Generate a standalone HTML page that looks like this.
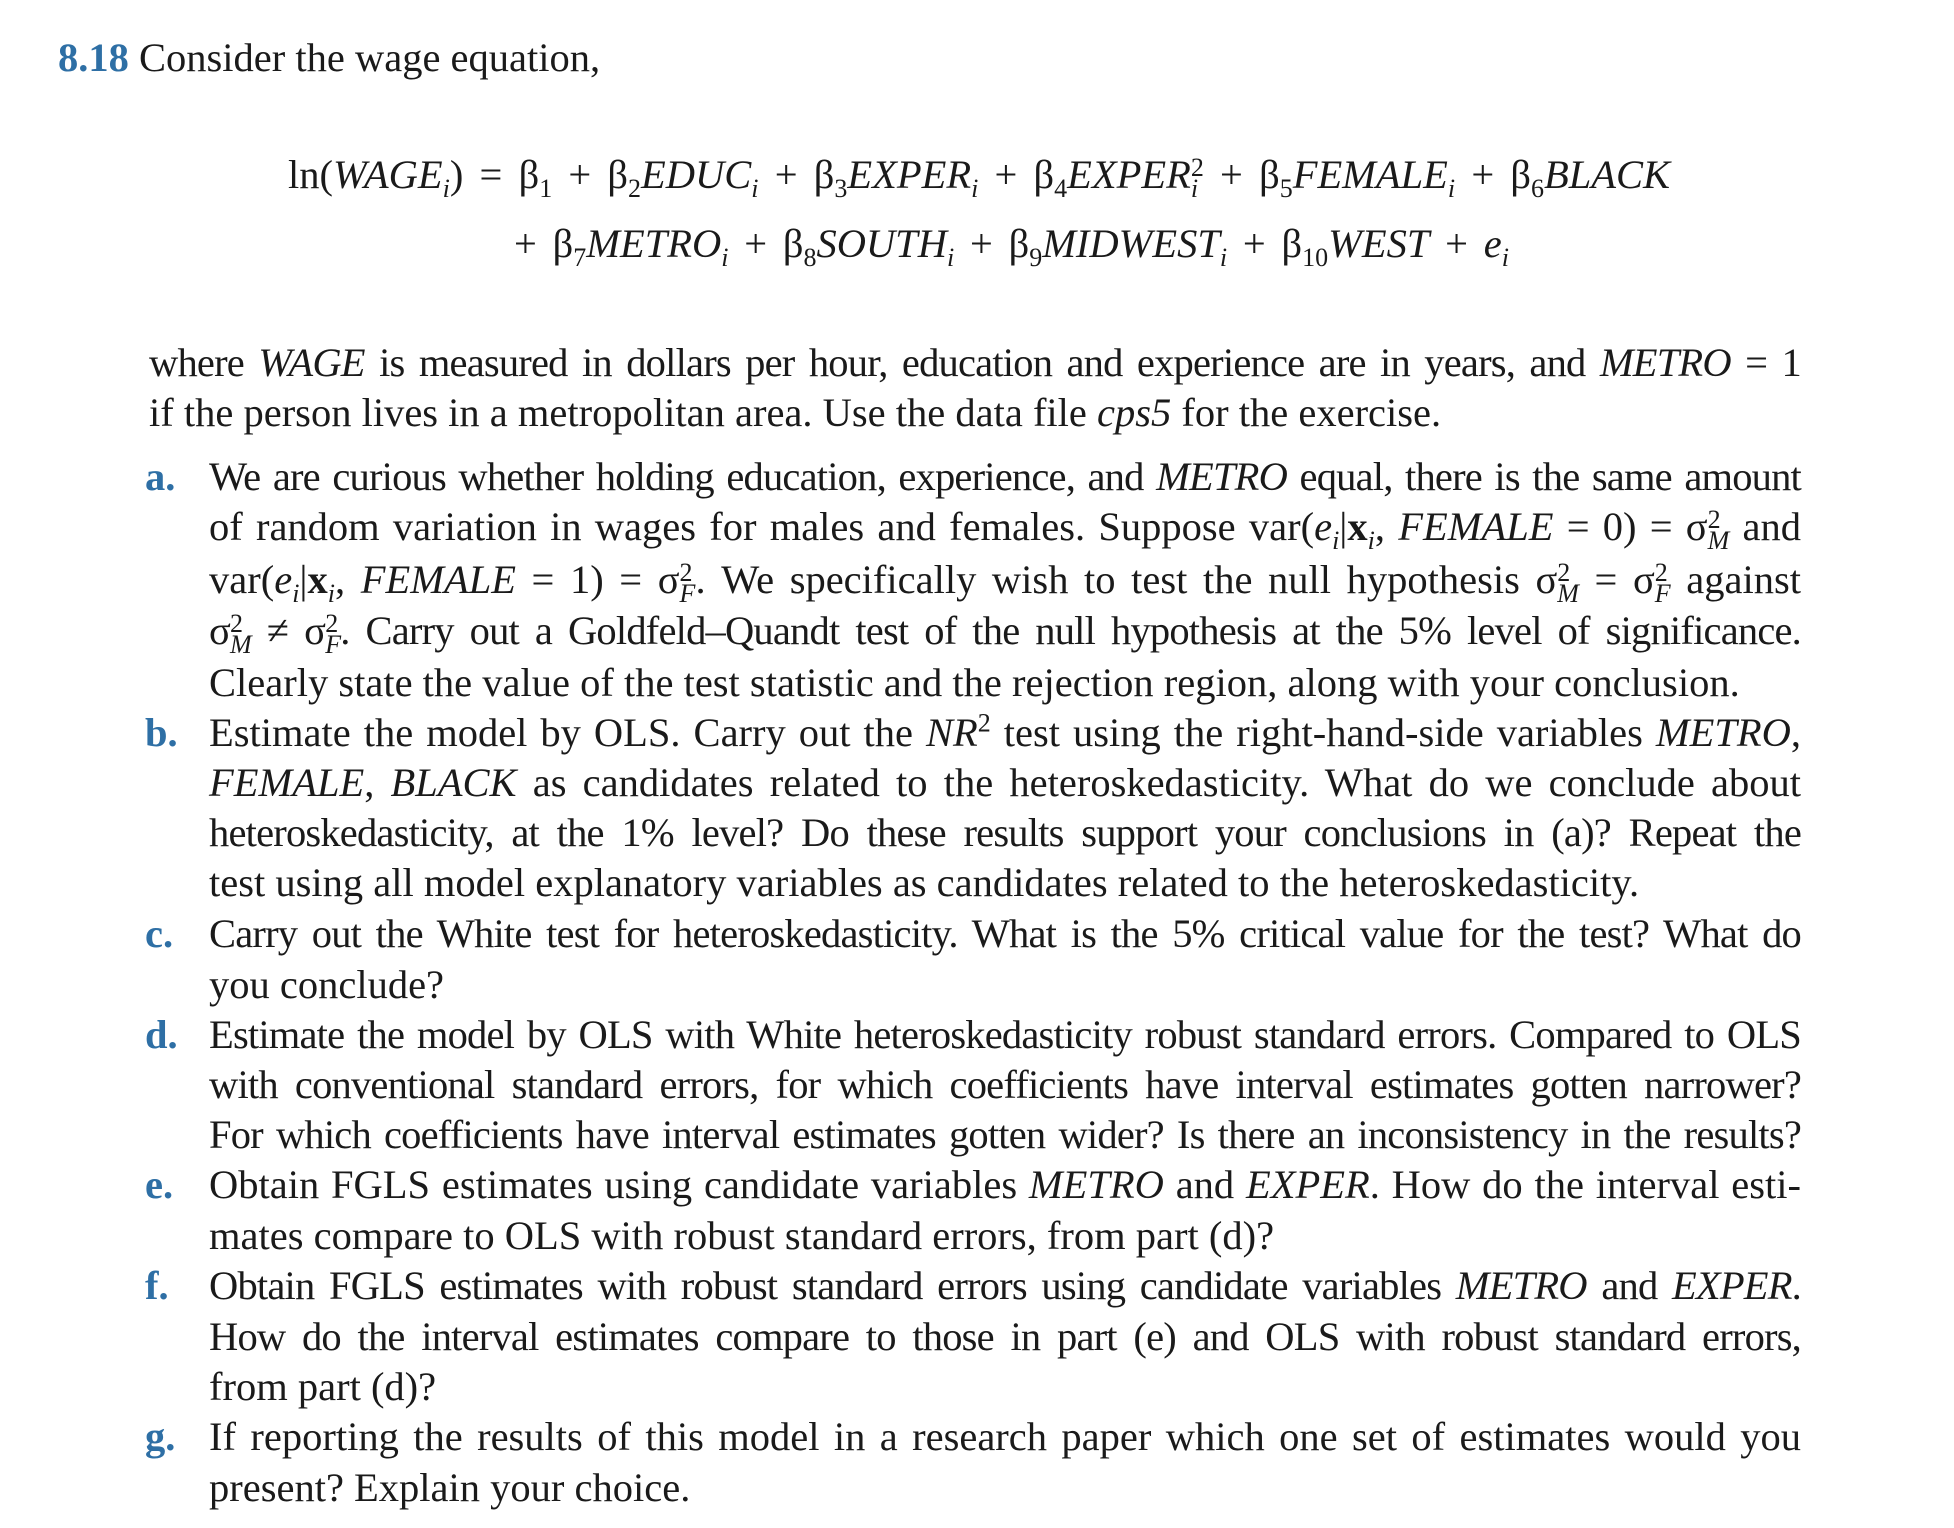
<!DOCTYPE html>
<html><head><meta charset="utf-8"><style>
body{margin:0;width:1954px;height:1528px;background:#fff;overflow:hidden;font-family:"Liberation Serif",serif;font-size:40.5px;color:#1a1a1a}
.l{position:absolute;height:50px;line-height:50px;white-space:nowrap;text-align:justify;text-align-last:justify}
.t{left:209px;width:1592px}
.p{left:149px;width:1652px}
.last{text-align-last:left}
.lb{position:absolute;left:145px;height:50px;line-height:50px;color:#2e6fa5;font-weight:bold}
i{font-style:italic}
sub,sup{font-size:26px;line-height:0}
.ss{display:inline-block;vertical-align:-9px;line-height:21px;font-size:26px;text-align:left;text-align-last:left}
.tight{letter-spacing:-0.8px;word-spacing:-3px}
</style></head><body>
<div class="l" style="left:58px;top:33px;text-align-last:left"><b style="color:#2e6fa5">8.18</b> Consider the wage equation,</div>

<div class="l" style="left:288px;top:150px;width:1382px;word-spacing:-4px">ln(<i>WAGE<sub>i</sub></i>) = β<sub>1</sub> + β<sub>2</sub><i>EDUC<sub>i</sub></i> + β<sub>3</sub><i>EXPER<sub>i</sub></i> + β<sub>4</sub><i>EXPER</i><span class="ss">2<br><i>i</i></span> + β<sub>5</sub><i>FEMALE<sub>i</sub></i> + β<sub>6</sub><i>BLACK</i></div>
<div class="l" style="left:514px;top:219px;width:995px;word-spacing:-4px">+ β<sub>7</sub><i>METRO<sub>i</sub></i> + β<sub>8</sub><i>SOUTH<sub>i</sub></i> + β<sub>9</sub><i>MIDWEST<sub>i</sub></i> + β<sub>10</sub><i>WEST</i> + <i>e<sub>i</sub></i></div>

<div class="l p tight" style="top:338px">where <i>WAGE</i> is measured in dollars per hour, education and experience are in years, and <i>METRO</i> = 1</div>
<div class="l p last" style="top:388px">if the person lives in a metropolitan area. Use the data file <i>cps5</i> for the exercise.</div>

<div class="lb" style="top:452px">a.</div>
<div class="l t tight" style="top:452px">We are curious whether holding education, experience, and <i>METRO</i> equal, there is the same amount</div>
<div class="l t" style="top:502px">of random variation in wages for males and females. Suppose var(<i>e<sub>i</sub></i>|<b>x</b><sub><i>i</i></sub>, <i>FEMALE</i> = 0) = σ<span class="ss">2<br><i>M</i></span> and</div>
<div class="l t" style="top:555px">var(<i>e<sub>i</sub></i>|<b>x</b><sub><i>i</i></sub>, <i>FEMALE</i> = 1) = σ<span class="ss">2<br><i>F</i></span>. We specifically wish to test the null hypothesis σ<span class="ss">2<br><i>M</i></span> = σ<span class="ss">2<br><i>F</i></span> against</div>
<div class="l t tight" style="top:606px">σ<span class="ss">2<br><i>M</i></span> ≠ σ<span class="ss">2<br><i>F</i></span>. Carry out a Goldfeld–Quandt test of the null hypothesis at the 5% level of significance.</div>
<div class="l t last" style="top:658px">Clearly state the value of the test statistic and the rejection region, along with your conclusion.</div>

<div class="lb" style="top:708px">b.</div>
<div class="l t" style="top:708px">Estimate the model by OLS. Carry out the <i>NR</i><sup>2</sup> test using the right-hand-side variables <i>METRO</i>,</div>
<div class="l t" style="top:758px"><i>FEMALE</i>, <i>BLACK</i> as candidates related to the heteroskedasticity. What do we conclude about</div>
<div class="l t tight" style="top:808px">heteroskedasticity, at the 1% level? Do these results support your conclusions in (a)? Repeat the</div>
<div class="l t last" style="top:858px">test using all model explanatory variables as candidates related to the heteroskedasticity.</div>

<div class="lb" style="top:909px">c.</div>
<div class="l t tight" style="top:909px">Carry out the White test for heteroskedasticity. What is the 5% critical value for the test? What do</div>
<div class="l t last" style="top:960px">you conclude?</div>

<div class="lb" style="top:1010px">d.</div>
<div class="l t tight" style="top:1010px">Estimate the model by OLS with White heteroskedasticity robust standard errors. Compared to OLS</div>
<div class="l t tight" style="top:1060px">with conventional standard errors, for which coefficients have interval estimates gotten narrower?</div>
<div class="l t tight" style="top:1110px">For which coefficients have interval estimates gotten wider? Is there an inconsistency in the results?</div>

<div class="lb" style="top:1160px">e.</div>
<div class="l t" style="top:1160px">Obtain FGLS estimates using candidate variables <i>METRO</i> and <i>EXPER</i>. How do the interval esti-</div>
<div class="l t last" style="top:1211px">mates compare to OLS with robust standard errors, from part (d)?</div>

<div class="lb" style="top:1261px">f.</div>
<div class="l t tight" style="top:1261px">Obtain FGLS estimates with robust standard errors using candidate variables <i>METRO</i> and <i>EXPER</i>.</div>
<div class="l t tight" style="top:1312px">How do the interval estimates compare to those in part (e) and OLS with robust standard errors,</div>
<div class="l t last" style="top:1362px">from part (d)?</div>

<div class="lb" style="top:1412px">g.</div>
<div class="l t" style="top:1412px">If reporting the results of this model in a research paper which one set of estimates would you</div>
<div class="l t last" style="top:1463px">present? Explain your choice.</div>
</body></html>
